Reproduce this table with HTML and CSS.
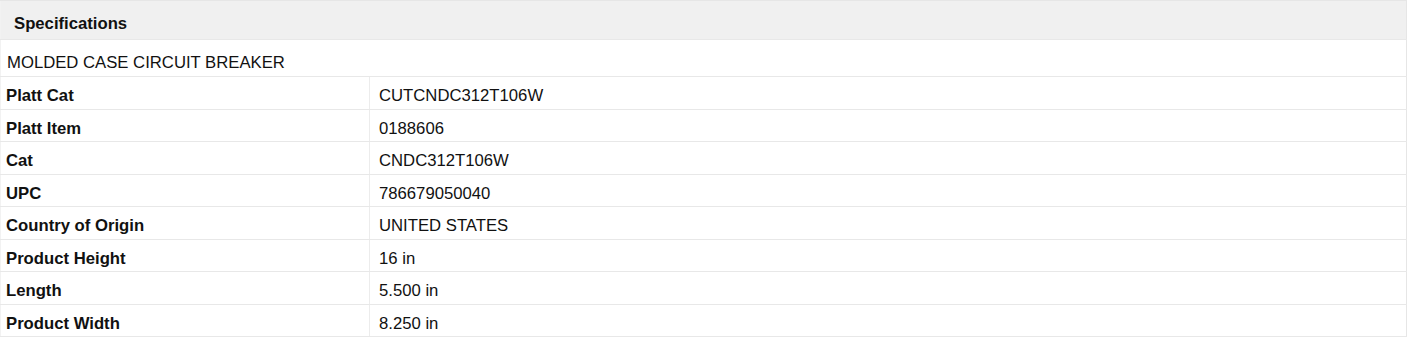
FILE: index.html
```html
<!DOCTYPE html>
<html>
<head>
<meta charset="utf-8">
<link rel="stylesheet" href="styles.css">
</head>
<body>
<table class="specs">
  <colgroup>
    <col class="col-label">
    <col class="col-value">
  </colgroup>
  <thead>
    <tr><th colspan="2" class="head">Specifications</th></tr>
  </thead>
  <tbody>
    <tr><td colspan="2" class="desc">MOLDED CASE CIRCUIT BREAKER</td></tr>
    <tr><td class="label">Platt Cat</td><td class="value">CUTCNDC312T106W</td></tr>
    <tr><td class="label">Platt Item</td><td class="value">0188606</td></tr>
    <tr><td class="label">Cat</td><td class="value">CNDC312T106W</td></tr>
    <tr><td class="label">UPC</td><td class="value">786679050040</td></tr>
    <tr><td class="label">Country of Origin</td><td class="value">UNITED STATES</td></tr>
    <tr><td class="label">Product Height</td><td class="value">16 in</td></tr>
    <tr><td class="label">Length</td><td class="value">5.500 in</td></tr>
    <tr><td class="label">Product Width</td><td class="value">8.250 in</td></tr>
  </tbody>
</table>
</body>
</html>
```
FILE: styles.css
```css
html, body {
  margin: 0;
  padding: 0;
  background: #ffffff;
}
body {
  font-family: "Liberation Sans", Arial, sans-serif;
  font-size: 16.7px;
  color: #111111;
}
.specs {
  width: 1407px;
  border-collapse: collapse;
  table-layout: fixed;
  border-right: 1px solid #e6e6e6;
  border-left: 1px solid #f2f2f2;
}
.col-label {
  width: 369px;
}
.specs td, .specs th {
  padding: 0;
  border-bottom: 1px solid #e8e8e8;
  vertical-align: top;
  text-align: left;
}
.specs .head {
  background: #f0f0f0;
  font-weight: bold;
  line-height: 24px;
  padding: 11px 0 3px 13px;
  border-top: 1px solid #e6e6e6;
}
.specs .desc {
  line-height: 25px;
  padding: 10px 0 1px 6px;
}
.specs .label {
  line-height: 22.5px;
  padding: 8px 0 1px 5px;
  font-weight: bold;
  border-right: 1px solid #ececec;
}
.specs .value {
  line-height: 22.5px;
  padding: 8px 0 1px 9px;
}
```
